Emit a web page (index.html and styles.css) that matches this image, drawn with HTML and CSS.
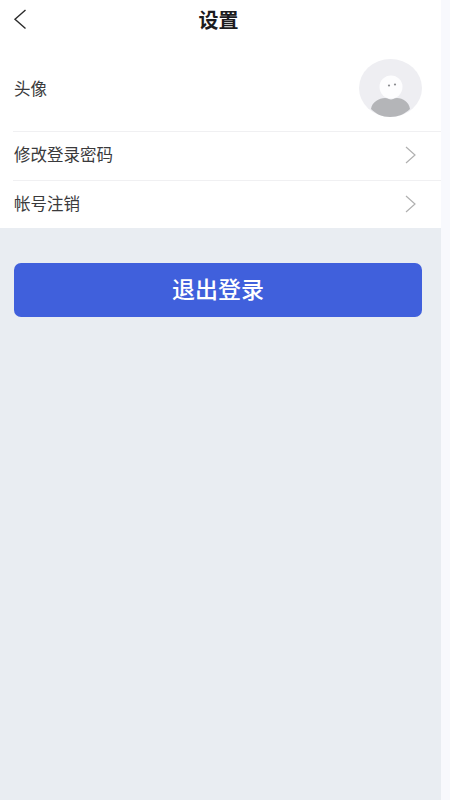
FILE: index.html
```html
<!DOCTYPE html>
<html lang="zh-CN">
<head>
<meta charset="utf-8">
<title>设置</title>
<link rel="stylesheet" href="styles.css">
</head>
<body>
<div class="page">
  <main class="main">
    <section class="panel">
      <header class="header">
        <svg class="back" width="14" height="22" viewBox="0 0 14 22"><path d="M12.500 2 2 11.200l10.500 9.300" fill="none" stroke="#2b2b2b" stroke-width="1.400"/></svg>
        <h1 class="title">设置</h1>
      </header>
      <div class="row row-avatar">
        <span class="label">头像</span>
        <svg class="avatar" width="63" height="58" viewBox="0 0 63 58">
          <ellipse cx="31.500" cy="29" rx="31.500" ry="29" fill="#eeeef2"/>
          <path d="M12 50c1-7 8-11 14-11 3 0 4 1.500 6 1.500s3-1.500 6-1.500c6 0 12 4 13 11-5 5-12 8-20 8s-14-3-19-8z" fill="#b4b5b8"/>
          <circle cx="32" cy="28" r="11.500" fill="#fdfdfe"/>
          <circle cx="30" cy="26.500" r="1.100" fill="#8b8c90"/>
          <circle cx="36" cy="25.500" r="1.100" fill="#8b8c90"/>
        </svg>
      </div>
      <div class="row row-link">
        <span class="label">修改登录密码</span>
        <svg class="chevron" width="11" height="18" viewBox="0 0 11 18"><path d="M1 1l9 8-9 8" fill="none" stroke="#b0b0b0" stroke-width="1.200"/></svg>
      </div>
      <div class="row row-link">
        <span class="label">帐号注销</span>
        <svg class="chevron" width="11" height="18" viewBox="0 0 11 18"><path d="M1 1l9 8-9 8" fill="none" stroke="#b0b0b0" stroke-width="1.200"/></svg>
      </div>
    </section>
    <button class="logout" type="button">退出登录</button>
  </main>
  <div class="strip"></div>
</div>
</body>
</html>
```

FILE: styles.css
```css
* {
  box-sizing: border-box;
}

html,
body {
  margin: 0;
  padding: 0;
  height: 100%;
}

body {
  font-family: "Noto Sans CJK SC", "Liberation Sans", sans-serif;
  overflow: hidden;
}

.page {
  display: flex;
  width: 450px;
  height: 800px;
}

.main {
  width: 441px;
  background: #e9edf2;
}

.strip {
  width: 9px;
  background: #f8f9fd;
}

.panel {
  height: 228px;
  background: #fff;
  padding-left: 13px;
}

.header {
  position: relative;
  height: 42px;
  display: flex;
  justify-content: center;
  align-items: center;
  padding-right: 17px;
  padding-bottom: 2px;
}

.back {
  position: absolute;
  left: 0;
  top: 8px;
}

.title {
  margin: 0;
  font-size: 20px;
  line-height: 40px;
  font-weight: 700;
  color: #1c1c1e;
}

.row {
  display: flex;
  justify-content: space-between;
  align-items: center;
  padding-right: 19px;
}

.row-avatar {
  height: 90px;
  padding-top: 2px;
  border-bottom: 1px solid #f0f0f2;
}

.row-link {
  height: 49px;
  padding-right: 25px;
  padding-bottom: 4px;
  border-bottom: 1px solid #f0f0f2;
}

.row-link:last-child {
  height: 47px;
  border-bottom: 0;
}

.label {
  margin-left: 1px;
  font-size: 16.500px;
  line-height: 24px;
  color: #3a3a3c;
}

.avatar {
  display: block;
}

.chevron {
  display: block;
  margin-top: 2px;
}

.logout {
  display: block;
  width: 408px;
  height: 54px;
  margin: 35px 0 0 14px;
  padding: 0 0 4px;
  border: 0;
  border-radius: 7px;
  background: #4060dc;
  color: #fff;
  font-family: inherit;
  font-size: 23px;
  font-weight: 500;
}
```
